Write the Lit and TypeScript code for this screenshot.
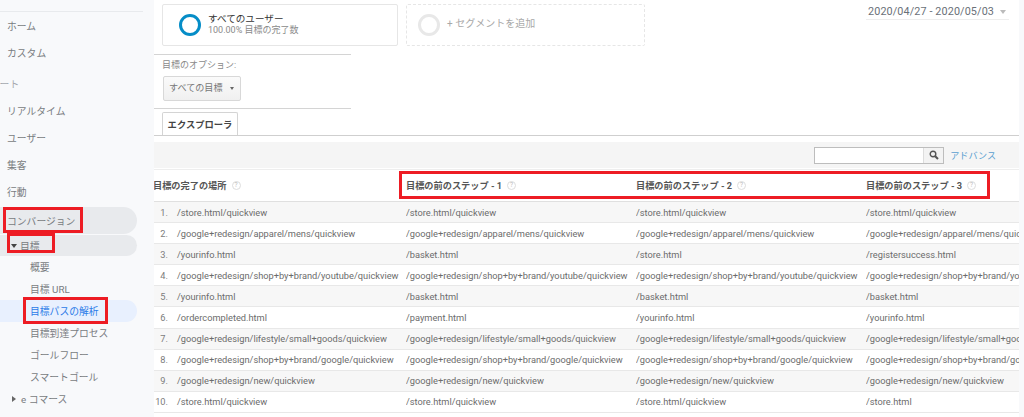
import { LitElement, html, css } from "lit";
import { customElement } from "lit/decorators.js";

const rows: string[][] = [
  ["/store.html/quickview", "/store.html/quickview", "/store.html/quickview", "/store.html/quickview"],
  ["/google+redesign/apparel/mens/quickview", "/google+redesign/apparel/mens/quickview", "/google+redesign/apparel/mens/quickview", "/google+redesign/apparel/mens/quickview"],
  ["/yourinfo.html", "/basket.html", "/store.html", "/registersuccess.html"],
  ["/google+redesign/shop+by+brand/youtube/quickview", "/google+redesign/shop+by+brand/youtube/quickview", "/google+redesign/shop+by+brand/youtube/quickview", "/google+redesign/shop+by+brand/youtube/quickview"],
  ["/yourinfo.html", "/basket.html", "/basket.html", "/basket.html"],
  ["/ordercompleted.html", "/payment.html", "/yourinfo.html", "/yourinfo.html"],
  ["/google+redesign/lifestyle/small+goods/quickview", "/google+redesign/lifestyle/small+goods/quickview", "/google+redesign/lifestyle/small+goods/quickview", "/google+redesign/lifestyle/small+goods/quickview"],
  ["/google+redesign/shop+by+brand/google/quickview", "/google+redesign/shop+by+brand/google/quickview", "/google+redesign/shop+by+brand/google/quickview", "/google+redesign/shop+by+brand/google/quickview"],
  ["/google+redesign/new/quickview", "/google+redesign/new/quickview", "/google+redesign/new/quickview", "/google+redesign/new/quickview"],
  ["/store.html/quickview", "/store.html/quickview", "/store.html/quickview", "/store.html"],
];

@customElement("app-root")
export class AppRoot extends LitElement {
  static styles = css`
    :host {
      display: flex;
      width: 1024px;
      height: 417px;
      overflow: hidden;
      background: #f8f9fb;
      font-family: Roboto, "Noto Sans CJK JP", sans-serif;
      color: #666;
    }
    * { box-sizing: border-box; }

    /* sidebar */
    .side {
      position: relative;
      flex: 0 0 154px;
      background: #f8f9fb;
      padding-top: 11px;
      font-size: 9.8px;
      color: #787c81;
    }
    .rule { width: 143px; height: 1px; background: #e8eaed; }
    .item { display: flex; align-items: center; height: 27px; padding-left: 7px; white-space: nowrap; }
    .heading { height: 31px; padding-top: 5px; padding-left: 0; color: #a5a9ae; overflow: hidden; width: 60px; }
    .heading span { margin-left: -20px; }
    .conv { margin-top: 2px; width: 137px; background: #e8eaed; border-radius: 0 14px 14px 0; }
    .goal { margin-top: 1px; height: 21px; width: 137px; background: #e8eaed; border-radius: 0 11px 11px 0; padding-left: 11px; }
    .sub { height: 22px; padding-left: 30px; width: 137px; }
    .active { background: #e8f0fe; color: #2a7be8; border-radius: 0 11px 11px 0; }
    .ecom { height: 22px; padding-left: 12px; }
    .down { width: 0; height: 0; border: 3px solid transparent; border-top: 4px solid #444; border-bottom: 0; margin-right: 3px; }
    .right { width: 0; height: 0; border: 3px solid transparent; border-left: 4px solid #666; border-right: 0; margin-right: 5px; }
    .red { position: absolute; border: 3px solid #ed1c24; pointer-events: none; }
    .r1 { left: 3px; top: 207px; width: 80px; height: 26px; }
    .r2 { left: 7px; top: 233px; width: 48px; height: 20px; }
    .r3 { left: 23px; top: 297px; width: 85px; height: 27px; }

    /* main */
    .main { flex: 0 0 865px; background: #fff; display: flex; flex-direction: column; overflow: hidden; }
    .top { display: flex; height: 54px; padding: 4px 10px 0 8px; }
    .seg {
      width: 236px; height: 42px; border: 1px solid #e6e6e6; border-radius: 2px;
      display: flex; align-items: center; padding-left: 16px; gap: 7px;
    }
    .seg + .seg { margin-left: 8px; width: 239px; border: 1px dashed #e6e6e6; padding-left: 11px; }
    .ring { width: 22px; height: 22px; border-radius: 50%; border: 3px solid #058dc7; flex: none; }
    .seg + .seg .ring { border-color: #e8e8e8; }
    .seg-text { margin-top: -2px; }
    .seg-name { font-size: 9.6px; line-height: 12px; color: #333; }
    .seg-sub { font-size: 9px; line-height: 11px; color: #8a8a8a; }
    .seg-add { font-size: 10px; color: #a8a8a8; margin-top: -6px; }
    .date {
      margin-left: auto; width: 143px; height: 16px; font-size: 10.8px; letter-spacing: 0.12px; color: #6a7078;
      border-bottom: 1px solid #eee; display: flex; align-items: center; gap: 6px; padding-left: 2px; white-space: nowrap;
    }
    .date-arrow { width: 0; height: 0; border: 3.5px solid transparent; border-top: 4px solid #bbb; border-bottom: 0; }
    .line { width: 197px; height: 1px; background: #d4d4d4; }
    .opts { height: 53px; padding: 4px 8px 0; font-size: 9px; color: #8a8a8a; line-height: 13px; }
    .drop {
      margin: 4px 0 0 1px; width: 78px; height: 25px; border: 1px solid #d8d8d8; border-radius: 2px;
      background: linear-gradient(#fafafa, #f0f0f0); display: flex; align-items: center; padding-left: 5px; gap: 7px;
      font-size: 9.1px; color: #777;
    }
    .drop-arrow { width: 0; height: 0; border: 2.5px solid transparent; border-top: 3px solid #666; border-bottom: 0; }
    .tabs { height: 27px; padding: 3px 0 0 8px; border-bottom: 1px solid #cfcfcf; }
    .tab {
      width: 76px; height: 23px; border: 1px solid #d4d4d4; border-bottom: 0; background: #fff; border-radius: 2px 2px 0 0;
      font-size: 9.3px; font-weight: 700; color: #444; display: flex; align-items: center; justify-content: center;
    }
    .toolbar {
      margin-top: 6px; height: 26px; background: #f5f5f5; display: flex; align-items: center; justify-content: flex-end;
      padding-right: 23px; gap: 6px; font-size: 9.1px;
    }
    .search { display: flex; width: 130px; height: 17px; border: 1px solid #bdbdbd; background: #fff; }
    .search-field { flex: 1; border-right: 1px solid #ddd; }
    .search-btn { width: 19px; background: #f3f3f3; display: flex; align-items: center; justify-content: center; }
    .adv { color: #5a9fd0; }

    .head, .row { display: grid; grid-template-columns: 252px 230px 230px 153px; white-space: nowrap; }
    .head { position: relative; margin-top: 1px; height: 33px; padding-bottom: 1px; border-top: 1px solid #eee; border-bottom: 1px solid #e0e0e0; align-items: center; font-size: 9.2px; font-weight: 700; color: #555; }
    .th { display: flex; align-items: center; gap: 5px; }
    .th:first-child { margin-left: -1px; }
    .help {
      width: 9px; height: 9px; border: 1px solid #ddd; border-radius: 50%; font-size: 6.5px; font-weight: 400; color: #bbb;
      display: flex; align-items: center; justify-content: center; line-height: 1;
    }
    .rh { left: 245px; top: 1px; width: 591px; height: 28px; }
    .row { height: 21.1px; align-items: center; font-size: 9.25px; color: #6c6c6c; border-bottom: 1px solid #e8e8e8; }
    .row:nth-child(odd) { background: #f7f7f7; }
    .td { overflow: hidden; }
    .first { display: flex; }
    .idx { width: 14px; text-align: right; margin-right: 9px; color: #7c7c7c; }
    .strip { flex: 1; background: #f8f9fb; }
  `;

  private help() { return html`<span class="help">?</span>`; }

  render() {
    return html`
      <nav class="side">
        <div class="rule"></div>
        <div class="item">ホーム</div>
        <div class="item">カスタム</div>
        <div class="item heading"><span>レポート</span></div>
        <div class="item">リアルタイム</div>
        <div class="item">ユーザー</div>
        <div class="item">集客</div>
        <div class="item">行動</div>
        <div class="item conv">コンバージョン</div>
        <div class="item goal"><span class="down"></span>目標</div>
        <div class="item sub">概要</div>
        <div class="item sub">目標 URL</div>
        <div class="item sub active">目標パスの解析</div>
        <div class="item sub">目標到達プロセス</div>
        <div class="item sub">ゴールフロー</div>
        <div class="item sub">スマートゴール</div>
        <div class="item ecom"><span class="right"></span>e コマース</div>
        <div class="red r1"></div>
        <div class="red r2"></div>
        <div class="red r3"></div>
      </nav>
      <main class="main">
        <div class="top">
          <div class="seg">
            <span class="ring"></span>
            <div class="seg-text">
              <div class="seg-name">すべてのユーザー</div>
              <div class="seg-sub">100.00% 目標の完了数</div>
            </div>
          </div>
          <div class="seg">
            <span class="ring"></span>
            <div class="seg-add">+ セグメントを追加</div>
          </div>
          <div class="date">2020/04/27 - 2020/05/03<span class="date-arrow"></span></div>
        </div>
        <div class="line"></div>
        <div class="opts">
          <div>目標のオプション:</div>
          <div class="drop">すべての目標<span class="drop-arrow"></span></div>
        </div>
        <div class="line"></div>
        <div class="tabs"><div class="tab">エクスプローラ</div></div>
        <div class="toolbar">
          <div class="search">
            <div class="search-field"></div>
            <div class="search-btn">
              <svg width="10" height="10" viewBox="0 0 10 10" fill="none" stroke="#555">
                <circle cx="4" cy="4" r="2.8" stroke-width="1.4"></circle>
                <path d="M6.2 6.2 9 9" stroke-width="2"></path>
              </svg>
            </div>
          </div>
          <span class="adv">アドバンス</span>
        </div>
        <div class="head">
          <div class="th">目標の完了の場所 ${this.help()}</div>
          <div class="th">目標の前のステップ - 1 ${this.help()}</div>
          <div class="th">目標の前のステップ - 2 ${this.help()}</div>
          <div class="th">目標の前のステップ - 3 ${this.help()}</div>
          <div class="red rh"></div>
        </div>
        <div>
          ${rows.map(
            (r, i) => html`<div class="row">
              <div class="td first"><span class="idx">${i + 1}.</span><span>${r[0]}</span></div>
              <div class="td">${r[1]}</div>
              <div class="td">${r[2]}</div>
              <div class="td">${r[3]}</div>
            </div>`
          )}
        </div>
      </main>
      <div class="strip"></div>
    `;
  }
}
